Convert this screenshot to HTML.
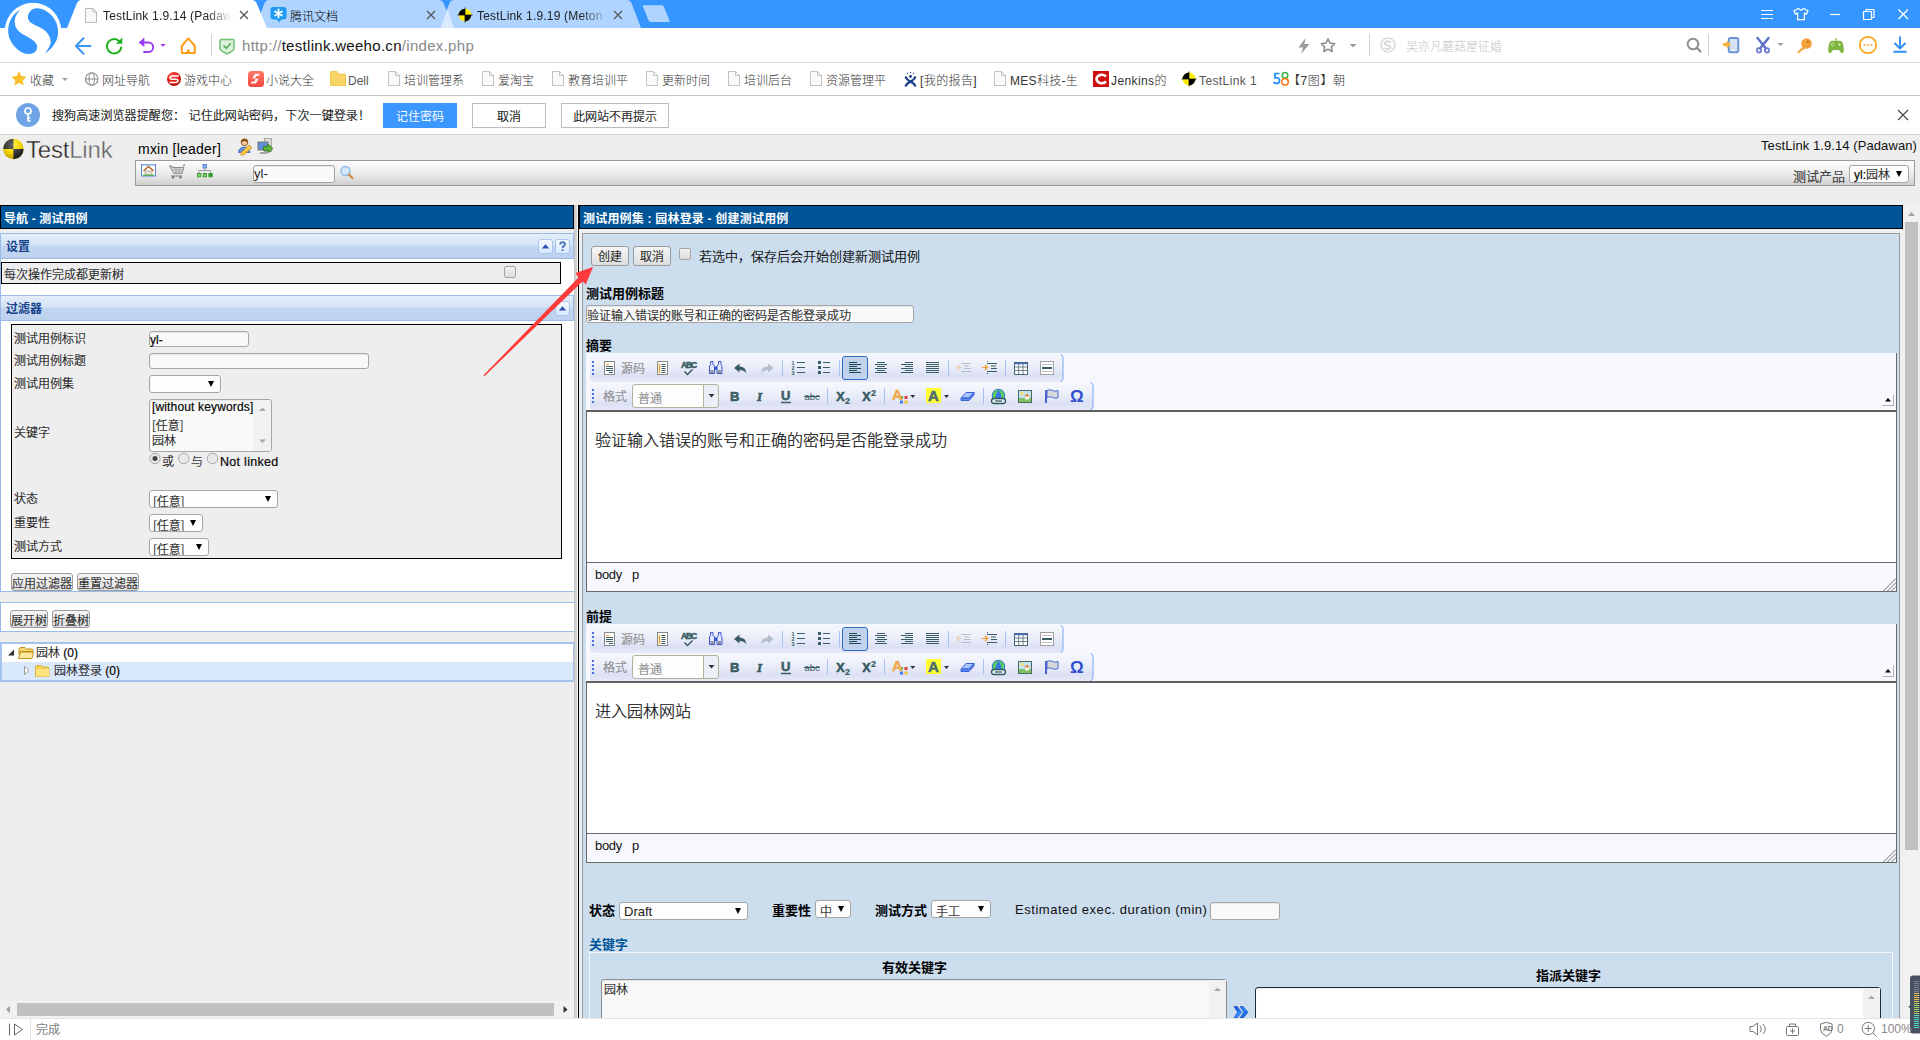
<!DOCTYPE html>
<html lang="zh-CN">
<head>
<meta charset="utf-8">
<title>TestLink 1.9.14 (Padawan)</title>
<style>
*{box-sizing:border-box;margin:0;padding:0}
html,body{width:1920px;height:1040px;overflow:hidden;background:#eee}
body{position:relative;font-family:"Liberation Sans","Noto Sans CJK SC",sans-serif;font-size:12px;color:#000}
.a{position:absolute}
.t{position:absolute;white-space:nowrap;line-height:16px;height:16px}
svg{position:absolute;overflow:visible}
/* ---------- browser chrome ---------- */
#titlebar{left:0;top:0;width:1920px;height:28px;background:#3696ff}
#navbar{left:0;top:28px;width:1920px;height:35px;background:#fff;border-bottom:1px solid #dedede}
#bmbar{left:0;top:63px;width:1920px;height:33px;background:#fff;border-bottom:1px solid #c6c6c6}
#infobar{left:0;top:96px;width:1920px;height:39px;background:#fff;border-bottom:1px solid #d4d4d4}
#statusbar{left:0;top:1018px;width:1920px;height:22px;background:#fff;border-top:1px solid #e4e4e4}
.tab{font-size:12px;color:#222;top:8px}
.bm{top:73px;font-size:12px;color:#333;font-weight:300}
.bml{color:#555}
.l{font-weight:300;color:#000;-webkit-text-stroke:.22px #222}
.doc{top:71px;width:12px;height:15px}
.ib{top:103px;height:25px;font-size:12px;line-height:26px;text-align:center;border:1px solid #bdbdbd;background:#fff;color:#000}
/* ---------- page ---------- */
.p{font-size:13px}
.c{font-family:"Noto Sans CJK SC","Liberation Sans",sans-serif}
.b{font-weight:bold}
.inp{position:absolute;background:#f9f9f9;border:1px solid #a6a6a6;border-radius:3px;box-shadow:inset 0 1px 1px rgba(0,0,0,.08)}
.sel{position:absolute;background:#fdfdfd;border:1px solid #a6a6a6;border-radius:3px}
.sel:after{content:"";position:absolute;right:6px;top:50%;margin-top:-3px;border:3.5px solid transparent;border-top:6px solid #000;border-bottom:0}
.btn{position:absolute;background:linear-gradient(#f6f6f6,#dedede);border:1px solid #9c9c9c;border-radius:3px;text-align:center;white-space:nowrap;font-size:12px;line-height:17px}
</style>
</head>
<body>
<!-- ======= BROWSER CHROME ======= -->
<div class="a" id="titlebar"></div>
<div class="a" id="navbar"></div>
<div class="a" id="bmbar"></div>
<div class="a" id="infobar"></div>
<svg style="left:0;top:0" width="1920" height="64" viewBox="0 0 1920 64">
  <!-- tabs -->
  <path d="M440 28 L449.5 3 Q451 0 454 0 L627 0 Q630 0 631.5 3 L641 28Z" fill="#afd4ff"/>
  <path d="M255 28 L264.5 3 Q266 0 269 0 L439 0 Q442 0 443.5 3 L454 28Z" fill="#afd4ff"/>
  <path d="M440.5 28 L447.5 9 L454 28Z" fill="#d9eaff"/>
  <path d="M67 28 L77 3 Q78.5 0 81.5 0 L252 0 Q255 0 256.5 3 L267 28Z" fill="#fff"/>
  <path d="M642.5 5.3 L661.5 5.3 Q663.3 5.3 664 7 L670 22 L651 22 Q649.2 22 648.5 20.3Z" fill="#afd4ff"/>
  <!-- logo -->
  <circle cx="33" cy="31" r="28.2" fill="#fff"/>
  <path d="M35 8.4 C44 7.5 52.5 14 56.5 23 C59 30 58.5 38 55 43 C52 48.5 48 51.5 45 53.2 C49.5 48 51.5 42.5 50.6 40.6 C50 36 47.5 32.5 43.5 29.5 C39 26.5 33 24.5 30 21.9 C27.5 19.5 27.3 15.5 29.5 12 C31 9.8 33 8.6 35 8.4Z" fill="#3696ff"/>
  <path d="M20 10 C17 13 14.7 17.5 14.7 21.2 C14.7 25.5 16 28 18.7 31.2 C22 34.5 28 36.5 32 39.5 C35.5 42 37.2 44.5 37.2 46.5 C37.2 49 36.2 51.5 33.5 53 C30 54.5 24.5 54.3 21 52 C15.5 48.5 11 43 9 37 C7.5 31.5 8 25 10.5 20 C13 15 16.5 11.8 20 10Z" fill="#3696ff"/>
  <!-- tab icons -->
  <path d="M85.5 8.5 H93 L96.5 12 V22.5 H85.5Z M93 8.5 V12 H96.5" fill="#f8f8f8" stroke="#b9b9b9" stroke-width="1"/>
  <path d="M240 11 l8 8 m0 -8 l-8 8" stroke="#555" stroke-width="1.2" fill="none"/>
  <path d="M273.5 7 h10 a3 3 0 0 1 3 3 v6.5 a3 3 0 0 1 -3 3 h-2.5 l-1.3 3 l-3 -3 h-3.2 a3 3 0 0 1 -3 -3 v-6.500 a3 3 0 0 1 3 -3z" fill="#1e9bf0"/>
  <path d="M278.5 9.5 v8 M275 11.500 l7 4 M282 11.500 l-7 4" stroke="#fff" stroke-width="1.8" stroke-linecap="round"/>
  <path d="M427 11 l8 8 m0 -8 l-8 8" stroke="#555" stroke-width="1.2" fill="none"/>
  <g transform="translate(465,15)"><circle r="6.300" fill="#ffee00"/><path d="M0 0 V-6.300 A6.300 6.300 0 0 0 -6.300 0Z M0 0 V6.300 A6.300 6.300 0 0 0 6.300 0Z" fill="#000"/><path d="M-7.500 0 h15 M0 -7.500 v15" stroke="#000" stroke-width=".7"/></g>
  <path d="M614 11 l8 8 m0 -8 l-8 8" stroke="#555" stroke-width="1.2" fill="none"/>
  <!-- window controls -->
  <path d="M1761 10.500 h12 M1761 14.500 h12 M1761 18.500 h12" stroke="#fff" stroke-width="1.200"/>
  <path d="M1798.300 8.500 l2.700 1.800 l2.700 -1.800 l4.300 2.300 l-1.600 3.300 l-2 -.9 v6.500 h-6.800 v-6.500 l-2 .9 l-1.600 -3.300z" fill="none" stroke="#fff" stroke-width="1.300" stroke-linejoin="round"/>
  <path d="M1830 14.500 h10" stroke="#fff" stroke-width="1.200"/>
  <path d="M1863.500 11.500 h8 v8 h-8z M1866 11.500 v-2 h8 v8 h-2.500" fill="none" stroke="#fff" stroke-width="1.200" stroke-linejoin="round"/>
  <path d="M1898.500 9.500 l9.500 9.500 m0 -9.500 l-9.500 9.500" stroke="#fff" stroke-width="1.300"/>
  <!-- nav icons -->
  <path d="M90.500 46 H76 M83.500 38.300 L76 46 L83.500 53.700" fill="none" stroke="#3c96f5" stroke-width="2" stroke-linecap="round" stroke-linejoin="round"/>
  <path d="M119.500 41.500 A7.200 7.200 0 1 0 121.200 47.500" fill="none" stroke="#1db11d" stroke-width="1.900" stroke-linecap="round"/>
  <path d="M122.300 37.500 v6.300 h-6.300z" fill="#1db11d"/>
  <path d="M140.500 42.500 H148.500 A4.700 4.700 0 0 1 148.500 52 H144" fill="none" stroke="#9a3cf0" stroke-width="1.900" stroke-linecap="round"/>
  <path d="M144.300 37.500 L138.800 42.500 L144.300 47z" fill="#9a3cf0"/>
  <path d="M160.500 44 h5 l-2.500 3z" fill="#9a3cf0"/>
  <path d="M181.800 46 L188.300 38.300 L194.800 46 V53 H181.800Z" fill="none" stroke="#ff9d1c" stroke-width="2" stroke-linejoin="round"/><path d="M187 53 v-3.500 h2.600 v3.500z" fill="#ff9d1c"/>
  <path d="M211.500 34 v22" stroke="#d0d0d0" stroke-width="1"/>
  <path d="M221 39.500 h12 q1 0 1 1 v7.500 q0 2 -1.500 2.800 l-5.500 3 l-5.500 -3 q-1.500 -.8 -1.500 -2.800 v-7.500 q0 -1 1 -1z" fill="#dff0de" stroke="#6cc070" stroke-width="1.500"/>
  <path d="M223.500 45.500 l2.800 2.800 l4.500 -5" fill="none" stroke="#4caf50" stroke-width="1.600"/>
  <path d="M1305.500 38 l-7 9.500 h4.500 l-2 6.500 l8.500 -10 h-5z" fill="#9a9a9a"/>
  <path d="M1328 38.800 l2 4.300 l4.700 .6 l-3.400 3.200 l.9 4.600 l-4.200 -2.300 l-4.200 2.300 l.9 -4.600 l-3.400 -3.200 l4.700 -.6z" fill="none" stroke="#8c8c8c" stroke-width="1.500" stroke-linejoin="round"/>
  <path d="M1349.500 44 h7 l-3.500 3.500z" fill="#999"/>
  <path d="M1369.500 34 v22" stroke="#d0d0d0" stroke-width="1"/>
  <circle cx="1388" cy="45" r="7" fill="none" stroke="#cfcfcf" stroke-width="1.200"/>
  <path d="M1391 42.500 q-3 -2 -5.500 -.5 q-1.500 1.500 .5 2.800 l3.500 1.200 q2 1.300 .3 2.700 q-2.500 1.300 -5.300 -.7" fill="none" stroke="#cfcfcf" stroke-width="1.500"/>
  <circle cx="1693" cy="44" r="5.300" fill="none" stroke="#909090" stroke-width="2"/>
  <path d="M1697 48 l3.500 3.500" stroke="#909090" stroke-width="2.200" stroke-linecap="round"/>
  <path d="M1708.500 34 v22" stroke="#d0d0d0" stroke-width="1"/>
  <rect x="1728.700" y="38" width="9.600" height="14.300" rx="1.800" fill="#d5e2f4" stroke="#6a93d6" stroke-width="1.900"/>
  <path d="M1732 50.500 h3" stroke="#fff" stroke-width="1"/>
  <path d="M1723 43 h3.500 v-2.500 l4.500 4 l-4.500 4 v-2.500 h-3.500z" fill="#f7b235"/>
  <path d="M1757.500 38 l8.500 10.500 M1768.500 38 l-8.500 10.500" stroke="#5f74c8" stroke-width="2.500" stroke-linecap="round"/>
  <circle cx="1759" cy="50.300" r="2.200" fill="none" stroke="#6f7fd0" stroke-width="1.800"/><circle cx="1767" cy="50.300" r="2.200" fill="none" stroke="#6f7fd0" stroke-width="1.800"/>
  <path d="M1777.500 43 h6 l-3 3z" fill="#999"/>
  <circle cx="1806.500" cy="43.500" r="5.300" fill="#f3a33c"/><circle cx="1808" cy="42" r="1.300" fill="#c07818"/>
  <path d="M1803 46.500 l-5.500 5.500 v1 h2.300 v-1.300 h1.500 v-1.500 h1.500 l2 -2z" fill="#f3a33c"/>
  <path d="M1829.500 53 q-2 -1 -1.200 -5 l.8 -4.500 q.6 -2.700 3.200 -2.700 h7.400 q2.600 0 3.200 2.700 l.8 4.500 q.8 4 -1.200 5 q-1.500 .3 -2.500 -1.500 l-1 -1.500 h-6 l-1 1.500 q-1 1.800 -2.500 1.500z" fill="#7db541"/>
  <path d="M1836 40.800 v-2.500" stroke="#7db541" stroke-width="1.500"/>
  <circle cx="1832.500" cy="44.500" r="1.500" fill="none" stroke="#d7ecbf" stroke-width=".8"/><path d="M1838 44.500 h3.200 M1839.600 43 v3" stroke="#d7ecbf" stroke-width=".8"/>
  <circle cx="1868" cy="45" r="8.200" fill="none" stroke="#ffa41c" stroke-width="1.800"/>
  <path d="M1863.700 45 h1.800 M1867.100 45 h1.800 M1870.500 45 h1.800" stroke="#ffa41c" stroke-width="1.600"/>
  <path d="M1900 36.500 v11.500 M1894.500 43 l5.500 5.500 l5.500 -5.500 M1893.500 51.700 h13" fill="none" stroke="#2f8ff5" stroke-width="1.900"/>
</svg>
<div class="t tab" style="left:103px;width:129px;overflow:hidden;letter-spacing:.19px;-webkit-mask-image:linear-gradient(90deg,#000 82%,transparent 100%);mask-image:linear-gradient(90deg,#000 80%,transparent 100%)">TestLink 1.9.14 (Padaw</div>
<div class="t tab" style="left:290px;top:9px;font-weight:300;color:#000">腾讯文档</div>
<div class="t tab" style="left:477px;width:131px;overflow:hidden;letter-spacing:.19px;-webkit-mask-image:linear-gradient(90deg,#000 82%,transparent 100%);mask-image:linear-gradient(90deg,#000 80%,transparent 100%)">TestLink 1.9.19 (Meton</div>
<div class="t" style="left:242px;top:36px;height:20px;line-height:20px;font-size:15px;letter-spacing:.3px;color:#888">http://<span style="color:#111">testlink.weeho.cn</span>/index.php</div>
<div class="t" style="left:1406px;top:39px;font-size:12px;color:#c4c4c4;font-weight:300">吴亦凡蘑菇屋征婚</div>
<!-- bookmarks -->
<svg style="left:0;top:63px" width="1920" height="33" viewBox="0 63 1920 33">
  <path d="M19 71.300 l2.300 4.800 l5.200 .7 l-3.800 3.600 l1 5.200 l-4.700 -2.600 l-4.700 2.600 l1 -5.200 l-3.800 -3.600 l5.200 -.7z" fill="#fbc02d"/>
  <path d="M62 78 h6 l-3 3z" fill="#a0a0a0"/>
  <circle cx="91.700" cy="79" r="6.200" fill="none" stroke="#8a8a8a" stroke-width="1.100"/>
  <ellipse cx="91.700" cy="79" rx="2.700" ry="6.200" fill="none" stroke="#8a8a8a" stroke-width="1"/>
  <path d="M85.500 79 h12.400" stroke="#8a8a8a" stroke-width="1"/>
  <defs><radialGradient id="sgr" cx="38%" cy="28%" r="80%"><stop offset="0" stop-color="#ff5a4a"/><stop offset=".55" stop-color="#dc1a14"/><stop offset="1" stop-color="#a80c08"/></radialGradient><linearGradient id="nvg" x1="0" y1="0" x2="0" y2="1"><stop offset="0" stop-color="#ff7868"/><stop offset="1" stop-color="#f04a40"/></linearGradient></defs>
  <circle cx="174" cy="79" r="7" fill="url(#sgr)"/>
  <path d="M178.800 76 H172.300 q-2.300 0 -2.300 1.600 q0 1.600 2.300 1.600 h3.400 q2.300 0 2.300 1.600 q0 1.600 -2.300 1.600 H169.300" fill="none" stroke="#fff" stroke-width="1.500"/>
  <rect x="248" y="71" width="16" height="16" rx="3.500" fill="url(#nvg)"/>
  <path d="M259.800 73.800 h-5 l-2.600 4.800 h3.600 l-1.400 2.800 h-2.600 l-1 2.200 h5.200 l2.600 -4.800 h-3.600 l1.400 -2.800 h2.400z" fill="#fff" opacity=".92"/>
  <path d="M330.500 72.500 q0 -1 1 -1 h5 q1 0 1 1 v1.500 h7 q1 0 1 1 v10.500 h-15z" fill="#f8d464" stroke="#f3c650" stroke-width="1"/>
  <path transform="translate(388 71)" d="M.5 .5 H7.500 L11.500 4.500 V14.500 H.5Z M7.500 .5 V4.500 H11.500" fill="#fafafa" stroke="#c2c2c2" stroke-width="1"/><path transform="translate(482 71)" d="M.5 .5 H7.500 L11.500 4.500 V14.500 H.5Z M7.500 .5 V4.500 H11.500" fill="#fafafa" stroke="#c2c2c2" stroke-width="1"/><path transform="translate(552 71)" d="M.5 .5 H7.500 L11.500 4.500 V14.500 H.5Z M7.500 .5 V4.500 H11.500" fill="#fafafa" stroke="#c2c2c2" stroke-width="1"/><path transform="translate(646 71)" d="M.5 .5 H7.500 L11.500 4.500 V14.500 H.5Z M7.500 .5 V4.500 H11.500" fill="#fafafa" stroke="#c2c2c2" stroke-width="1"/><path transform="translate(728 71)" d="M.5 .5 H7.500 L11.500 4.500 V14.500 H.5Z M7.500 .5 V4.500 H11.500" fill="#fafafa" stroke="#c2c2c2" stroke-width="1"/><path transform="translate(810 71)" d="M.5 .5 H7.500 L11.500 4.500 V14.500 H.5Z M7.500 .5 V4.500 H11.500" fill="#fafafa" stroke="#c2c2c2" stroke-width="1"/><path transform="translate(994 71)" d="M.5 .5 H7.500 L11.500 4.500 V14.500 H.5Z M7.500 .5 V4.500 H11.500" fill="#fafafa" stroke="#c2c2c2" stroke-width="1"/>
  <path d="M905.500 76.500 q1 3 5 5 q4 2 5 5 M915.500 76.500 q-1 3 -5 5 q-4 2 -5 5" fill="none" stroke="#1b3f8f" stroke-width="2.200"/>
  <circle cx="910.500" cy="76.500" r="1.400" fill="#1b3f8f"/>
  <path d="M907 73 l.8 .8 M910.500 72 v1 M914 73 l-.8 .8" stroke="#1b3f8f" stroke-width="1.100"/>
  <rect x="1093" y="71" width="16" height="16" fill="#d00f0f"/>
  <path d="M1106 76.500 q-2.500 -2.500 -6 -1.500 q-3.500 1.500 -3.500 4 q0 2.500 3.500 4 q3.500 1 6 -1.500" fill="none" stroke="#fff" stroke-width="2.600"/>
  <g transform="translate(1189,79)"><circle r="6.500" fill="#ffee00"/><path d="M0 0 V-6.500 A6.500 6.500 0 0 0 -6.500 0Z M0 0 V6.500 A6.500 6.500 0 0 0 6.500 0Z" fill="#000"/><path d="M-7.500 0 h15 M0 -7.500 v15" stroke="#000" stroke-width=".7"/></g>
  <path d="M1279.500 73.500 h-4.500 v4.500 q4 -1 4.500 2.200 q0 3.300 -3 3.300 q-2 0 -2.800 -1.500" fill="none" stroke="#1a8cff" stroke-width="1.700"/>
  <circle cx="1285" cy="75.300" r="2.800" fill="none" stroke="#3bb54a" stroke-width="1.600"/>
  <circle cx="1285" cy="81.800" r="3.300" fill="none" stroke="#ff7a1a" stroke-width="1.600"/>
</svg>
<div class="t bm" style="left:30px">收藏</div>
<div class="t bm" style="left:102px">网址导航</div>
<div class="t bm" style="left:184px">游戏中心</div>
<div class="t bm" style="left:266px">小说大全</div>
<div class="t bm bml" style="left:348px">Dell</div>
<div class="t bm" style="left:404px">培训管理系</div>
<div class="t bm" style="left:498px">爱淘宝</div>
<div class="t bm" style="left:568px">教育培训平</div>
<div class="t bm" style="left:662px">更新时间</div>
<div class="t bm" style="left:744px">培训后台</div>
<div class="t bm" style="left:826px">资源管理平</div>
<div class="t bm" style="left:920px;letter-spacing:.4px">[我的报告]</div>
<div class="t bm" style="left:1010px;letter-spacing:.3px">MES科技-生</div>
<div class="t bm" style="left:1111px;letter-spacing:.4px">Jenkins的</div>
<div class="t bm bml" style="left:1199px;letter-spacing:.4px">TestLink 1</div>
<div class="t bm" style="left:1288px;letter-spacing:.6px">【7图】朝</div>
<!-- info bar -->
<svg style="left:0;top:96px" width="1920" height="39" viewBox="0 96 1920 39">
  <circle cx="28" cy="115" r="12" fill="#6fa5e6"/>
  <circle cx="28" cy="111" r="3" fill="none" stroke="#fff" stroke-width="1.700"/>
  <path d="M28 114 v7.500 M28 118 h2.500 M28 121 h2.500" fill="none" stroke="#fff" stroke-width="1.700"/>
  <path d="M1898 110 l10 10 m0 -10 l-10 10" stroke="#444" stroke-width="1.100"/>
</svg>
<div class="t" style="left:52px;top:108px;font-size:12px;letter-spacing:.1px;color:#000;font-weight:300;-webkit-text-stroke-width:.22px">搜狗高速浏览器提醒您： 记住此网站密码，下次一键登录！</div>
<div class="a ib" style="left:383px;width:74px;background:#3a97ff;border-color:#3a97ff;color:#fff">记住密码</div>
<div class="a ib" style="left:472px;width:74px;font-weight:300;-webkit-text-stroke-width:.22px">取消</div>
<div class="a ib" style="left:561px;width:108px;font-weight:300;-webkit-text-stroke-width:.22px">此网站不再提示</div>
<!-- ======= PAGE: TestLink title frame ======= -->
<svg style="left:0;top:135px" width="300" height="30" viewBox="0 135 300 30">
  <defs>
    <radialGradient id="tly" cx="45%" cy="30%" r="75%"><stop offset="0" stop-color="#fff36a"/><stop offset=".5" stop-color="#f5d800"/><stop offset="1" stop-color="#b89a00"/></radialGradient>
    <radialGradient id="tlk" cx="45%" cy="30%" r="75%"><stop offset="0" stop-color="#666"/><stop offset="1" stop-color="#111"/></radialGradient>
  </defs>
  <circle cx="13.400" cy="149" r="10.200" fill="url(#tly)"/>
  <path d="M13.400 149 V138.800 A10.200 10.200 0 0 0 3.200 149Z M13.400 149 V159.200 A10.200 10.200 0 0 0 23.600 149Z" fill="url(#tlk)"/>
  <!-- user-edit icon -->
  <circle cx="244.500" cy="142.500" r="3.200" fill="#f6c9a0" stroke="#9a5a1c" stroke-width="1"/>
  <path d="M241.100 142.300 a3.400 3.400 0 0 1 6.800 0 q-1.500 -1.800 -3.400 -1.500 q-1.900 -.3 -3.400 1.500z" fill="#8a4a12" stroke="#8a4a12" stroke-width=".8"/>
  <path d="M238.500 152.500 q0 -5 6 -5.500 q5 .5 5.500 5.500z" fill="#5a8fe0" stroke="#3565b5" stroke-width=".8"/>
  <path d="M241.500 152 l7.500 -7 l3 2.500 l-7.500 7 l-3.500 .8z" fill="#f7c748" stroke="#d08a1c" stroke-width=".8"/>
  <!-- computer-go icon -->
  <rect x="264.500" y="138.500" width="7" height="13" fill="#dcdcdc" stroke="#9a9a9a" stroke-width=".8"/>
  <rect x="258" y="142" width="10" height="8" fill="#5b8fd8" stroke="#7a7a7a" stroke-width="1"/>
  <path d="M260 153 h7" stroke="#8a8a8a" stroke-width="1.500"/>
  <path d="M263.500 146.500 h4.500 v-2.500 l5 4.500 l-5 4.500 v-2.500 h-4.500z" fill="#5fb53a" stroke="#2f7a1a" stroke-width=".8"/>
</svg>
<div class="t" style="left:26px;top:136px;height:28px;line-height:28px;font-size:24px;letter-spacing:-.2px;color:#1c1c1c;-webkit-text-stroke:.4px #eee">Test<span style="color:#606060">Link</span></div>
<div class="t" style="left:138px;top:141px;font-size:14px;letter-spacing:.22px;color:#000">mxin [leader]</div>
<div class="t p" style="left:1761px;top:138px;letter-spacing:.08px;color:#111">TestLink 1.9.14 (Padawan)</div>
<div class="a" style="left:135px;top:160px;width:1780px;height:26px;border:1px solid #9a9a9a;background:linear-gradient(#fdfdfd 0%,#f1f1f1 35%,#e2e2e2 70%,#cfcfcf 100%)"></div>
<svg style="left:135px;top:160px" width="230" height="26" viewBox="135 160 230 26">
  <rect x="141.500" y="164.500" width="14" height="11.500" fill="#fff" stroke="#5b86d6" stroke-width="1"/>
  <path d="M142 165 h13" stroke="#9cbcf0" stroke-width="1.500"/>
  <path d="M143.500 171 l5 -4.500 l5 4.500" fill="none" stroke="#b5651d" stroke-width="1.500"/>
  <path d="M145 171 h7 v4 h-7z" fill="#e8e0d0" stroke="#8a8a8a" stroke-width=".6"/>
  <path d="M143 175.300 h11" stroke="#4caf50" stroke-width="1.200"/>
  <path d="M169.500 166 h2.300 l.7 1.500 h11.500 l-2 6 h-8z" fill="#d2d2d2" stroke="#8c8c8c" stroke-width="1"/><path d="M173.500 169.500 h9.500 M174.500 171.500 h8 M176 168 v5.500 M179 168 v5.500" stroke="#a8a8a8" stroke-width=".7"/>
  <path d="M183 166 l2 -1.500" stroke="#8c8c8c" stroke-width="1.200"/>
  <path d="M171 176 h11" stroke="#8c8c8c" stroke-width="1.300"/>
  <circle cx="173" cy="177.500" r="1.200" fill="#777"/><circle cx="180.500" cy="177.500" r="1.200" fill="#777"/>
  <rect x="203" y="164.500" width="3.500" height="3.500" fill="#8ab4f0" stroke="#3f7ad8" stroke-width=".8"/>
  <path d="M204.800 168 v2.500 M199 173 v-2.500 h11.500 v2.500" fill="none" stroke="#888" stroke-width=".8"/>
  <rect x="197.500" y="173.500" width="3.300" height="3.300" fill="#7fd06a" stroke="#2f9a2a" stroke-width=".9"/>
  <rect x="203.200" y="173.500" width="3.300" height="3.300" fill="#7fd06a" stroke="#2f9a2a" stroke-width=".9"/>
  <rect x="208.900" y="173.500" width="3.300" height="3.300" fill="#2f9a2a" stroke="#2f9a2a" stroke-width=".9"/>
  <circle cx="345.500" cy="171" r="4.500" fill="#d5e8fb" stroke="#8fb8e8" stroke-width="1.300"/>
  <path d="M349 174.500 l3.500 3.800" stroke="#c98a4a" stroke-width="2.200" stroke-linecap="round"/>
</svg>
<div class="inp" style="left:253px;top:165px;width:82px;height:18px;background:#fafafa"></div>
<div class="t p" style="left:254px;top:166px;color:#222">yl-</div>
<div class="t c" style="left:1793px;top:168px;font-size:13px;color:#222;font-weight:300;-webkit-text-stroke-width:.22px">测试产品</div>
<div class="sel" style="left:1849px;top:165px;width:60px;height:18px"></div>
<div class="t l" style="left:1854px;top:167px;font-size:12px">yl:园林</div>
<!-- ======= PAGE: left frame (navigation tree) ======= -->
<div class="a" style="left:0;top:205px;width:574px;height:24px;background:#005498;border:1px solid #000"></div>
<div class="t b" style="left:4px;top:211px;font-size:12px;letter-spacing:.12px;color:#fff">导航 - 测试用例</div>
<!-- settings panel -->
<div class="a" style="left:0;top:233px;width:574px;height:359px;background:#fff;border:1px solid #99bbe8;border-right:0"></div>
<div class="a" style="left:0;top:233px;width:574px;height:26px;border:1px solid #99bbe8;background:linear-gradient(#e3edf9 0%,#d5e3f5 45%,#c3d6f0 50%,#bdd2ee 100%)"></div>
<div class="t b" style="left:6px;top:239px;font-size:12px;color:#15428b">设置</div>
<div class="a" style="left:538px;top:239px;width:15px;height:15px;border:1px solid #a9c5ec;border-radius:3px;background:linear-gradient(#f4f9ff,#d8e9ff)"></div>
<div class="a" style="left:555px;top:239px;width:15px;height:15px;border:1px solid #a9c5ec;border-radius:3px;background:linear-gradient(#f4f9ff,#d8e9ff)"></div>
<svg style="left:538px;top:239px" width="32" height="14" viewBox="538 239 32 14"><path d="M541.800 248.500 h7.400 l-3.700 -4.200z" fill="#2b4fb0"/><path d="M560.200 244.500 q0 -2.200 2.400 -2.200 q2.400 0 2.400 2 q0 1.200 -1.300 1.900 q-1.100 .6 -1.100 1.800 M562.600 249.300 v1.700" fill="none" stroke="#4a78b8" stroke-width="1.900"/></svg>
<div class="a" style="left:1px;top:262px;width:560px;height:22px;background:#eee;border:1px solid #000"></div>
<div class="t l" style="left:4px;top:267px;font-size:12px">每次操作完成都更新树</div>
<div class="a" style="left:504px;top:266px;width:12px;height:12px;border:1px solid #a5a5a5;border-radius:2px;background:linear-gradient(#f2f2f2,#dcdcdc)"></div>
<!-- filter panel -->
<div class="a" style="left:0;top:295px;width:574px;height:26px;border:1px solid #99bbe8;background:linear-gradient(#e3edf9 0%,#d5e3f5 45%,#c3d6f0 50%,#bdd2ee 100%)"></div>
<div class="t b" style="left:6px;top:301px;font-size:12px;color:#15428b">过滤器</div>
<div class="a" style="left:555px;top:301px;width:15px;height:15px;border:1px solid #a9c5ec;border-radius:3px;background:linear-gradient(#f4f9ff,#d8e9ff)"></div>
<svg style="left:555px;top:301px" width="14" height="14" viewBox="555 301 14 14"><path d="M558.800 310.500 h7.400 l-3.700 -4.200z" fill="#2b4fb0"/></svg>
<div class="a" style="left:11px;top:324px;width:551px;height:235px;background:#eee;border:1px solid #000"></div>
<div class="t l" style="left:14px;top:331px">测试用例标识</div>
<div class="inp" style="left:149px;top:331px;width:100px;height:16px"></div>
<div class="t l" style="left:150px;top:332px">yl-</div>
<div class="t l" style="left:14px;top:353px">测试用例标题</div>
<div class="inp" style="left:149px;top:353px;width:220px;height:16px"></div>
<div class="t l" style="left:14px;top:376px">测试用例集</div>
<div class="sel" style="left:149px;top:375px;width:72px;height:18px"></div>
<div class="inp" style="left:149px;top:399px;width:123px;height:53px;overflow:hidden"><div class="a" style="right:0;top:0;width:17px;height:51px;background:#f1f1f1"></div></div>
<svg style="left:254px;top:400px" width="17" height="51" viewBox="254 400 17 51"><path d="M259 411 h7 l-3.500 -3.500z M259 439.500 h7 l-3.500 3.500z" fill="#a8a8a8"/></svg>
<div class="t l" style="left:152px;top:399px;letter-spacing:.15px">[without keywords]</div>
<div class="t l c" style="left:152px;top:417px">[任意]</div>
<div class="t l" style="left:152px;top:433px">园林</div>
<div class="t l" style="left:14px;top:425px">关键字</div>
<svg style="left:149px;top:452px" width="70" height="14" viewBox="149 452 70 14">
  <circle cx="155" cy="458.500" r="5.200" fill="#e9e9e9" stroke="#a8a8a8" stroke-width="1"/><circle cx="155" cy="458.500" r="2.500" fill="#444"/>
  <circle cx="183.700" cy="458.500" r="5.200" fill="#e9e9e9" stroke="#a8a8a8" stroke-width="1"/>
  <circle cx="212.500" cy="458.500" r="5.200" fill="#e9e9e9" stroke="#a8a8a8" stroke-width="1"/>
</svg>
<div class="t l" style="left:162px;top:454px">或</div>
<div class="t l" style="left:191px;top:454px">与</div>
<div class="t l" style="left:220px;top:454px;font-size:12.500px;letter-spacing:.3px">Not linked</div>
<div class="t l" style="left:14px;top:491px">状态</div>
<div class="sel" style="left:149px;top:490px;width:129px;height:18px"></div>
<div class="t l c" style="left:153px;top:493px;height:14px;overflow:hidden">[任意]</div>
<div class="t l" style="left:14px;top:515px">重要性</div>
<div class="sel" style="left:149px;top:514px;width:54px;height:18px"></div>
<div class="t l c" style="left:153px;top:517px;height:14px;overflow:hidden">[任意]</div>
<div class="t l" style="left:14px;top:539px">测试方式</div>
<div class="sel" style="left:149px;top:538px;width:60px;height:18px"></div>
<div class="t l c" style="left:153px;top:541px;height:14px;overflow:hidden">[任意]</div>
<div class="btn" style="left:11px;top:573px;width:62px;height:18px;line-height:20px;font-weight:300;-webkit-text-stroke-width:.22px;color:#111">应用过滤器</div>
<div class="btn" style="left:77px;top:573px;width:62px;height:18px;line-height:20px;font-weight:300;-webkit-text-stroke-width:.22px;color:#111">重置过滤器</div>
<!-- tree buttons panel -->
<div class="a" style="left:0;top:602px;width:574px;height:30px;background:#fff;border:1px solid #99bbe8;border-right:0"></div>
<div class="btn" style="left:10px;top:610px;width:38px;height:18px;line-height:20px;font-weight:300;-webkit-text-stroke-width:.22px;color:#111">展开树</div>
<div class="btn" style="left:52px;top:610px;width:38px;height:18px;line-height:20px;font-weight:300;-webkit-text-stroke-width:.22px;color:#111">折叠树</div>
<!-- tree -->
<div class="a" style="left:0;top:642px;width:574px;height:40px;background:#fff;border:2px solid #a6c3ec;border-right-width:1px"></div>
<div class="a" style="left:2px;top:662px;width:571px;height:18px;background:#d9e8fb"></div>
<svg style="left:0;top:643px" width="60" height="38" viewBox="0 643 60 38">
  <path d="M14 649.500 v6 h-6z" fill="#333"/>
  <path d="M19 649.500 q0 -2 2 -2 h4 l1.500 1.500 h5 q1.500 0 1.500 1.500 v1 h-12 l-2 3z" fill="#f5d774" stroke="#b8860b" stroke-width=".9"/>
  <path d="M18.500 658.500 l2 -6.500 h13 l-1.500 6.500z" fill="#fbe9a0" stroke="#b8860b" stroke-width=".9"/>
  <path d="M24.500 666.500 v8 l4.500 -4z" fill="#fff" stroke="#999" stroke-width="1"/>
  <path d="M35.500 667 q0 -1.500 1.500 -1.500 h4 l1.500 1.500 h5 q1.500 0 1.500 1.500 v8 h-13.500z" fill="#f5d15a" stroke="#d4a52a" stroke-width=".8"/>
  <path d="M36 669 h13 v7.500 h-13z" fill="#fbe27a"/>
</svg>
<div class="t l" style="left:36px;top:645px">园林 (0)</div>
<div class="t l" style="left:54px;top:663px">园林登录 (0)</div>
<!-- horizontal scrollbar -->
<div class="a" style="left:0;top:1001px;width:574px;height:18px;background:#f1f1f1"></div>
<div class="a" style="left:17px;top:1003px;width:537px;height:13px;background:#c1c1c1"></div>
<svg style="left:0;top:1001px" width="574" height="18" viewBox="0 1001 574 18"><path d="M10 1005.800 v7.400 l-4 -3.700z" fill="#a0a0a0"/><path d="M563.500 1006 v7 l4 -3.500z" fill="#333"/></svg>
<!-- frame splitter -->
<div class="a" style="left:574px;top:205px;width:4px;height:813px;background:linear-gradient(90deg,#c4c4c4 0,#c4c4c4 1px,#d2d2d2 1px,#d2d2d2 3px,#f6f6f6 3px)"></div>
<!-- ======= PAGE: right frame (create test case) ======= -->
<style>.tbb{height:28px;border-radius:4px 3px 3px 4px;background:linear-gradient(#f7f8fd 0%,#f0f2fb 30%,#e4e8f7 60%,#dbe0f4 78%,#e6e9f8 100%)}</style>
<div class="a" style="left:578px;top:205px;width:1px;height:813px;background:#000"></div>
<div class="a" style="left:579px;top:205px;width:1324px;height:24px;background:#005498;border:1px solid #000"></div>
<div class="t b" style="left:583px;top:211px;font-size:12px;letter-spacing:.2px;color:#fff">测试用例集 : 园林登录 - 创建测试用例</div>
<div class="a" style="left:582px;top:233px;width:1318px;height:800px;background:#ccddee;border:1px solid #999"></div>
<div class="btn" style="left:591px;top:246px;width:38px;height:20px;font-size:12px;line-height:20px;color:#111;font-weight:300;-webkit-text-stroke-width:.22px">创建</div>
<div class="btn" style="left:633px;top:246px;width:38px;height:20px;font-size:12px;line-height:20px;color:#111;font-weight:300;-webkit-text-stroke-width:.22px">取消</div>
<div class="a" style="left:679px;top:248px;width:12px;height:12px;border:1px solid #a5a5a5;border-radius:2px;background:linear-gradient(#f2f2f2,#dcdcdc)"></div>
<div class="t c" style="left:699px;top:248px;font-size:13px;color:#000;font-weight:300;-webkit-text-stroke-width:.22px">若选中，保存后会开始创建新测试用例</div>
<div class="t c b" style="left:586px;top:285px;font-size:13px">测试用例标题</div>
<div class="inp" style="left:586px;top:305px;width:328px;height:18px"></div>
<div class="t c l" style="left:587px;top:307px;font-size:12px">验证输入错误的账号和正确的密码是否能登录成功</div>
<div class="t c b" style="left:586px;top:337px;font-size:13px">摘要</div>
<div class="a" style="left:586px;top:353px;width:1311px;height:57px;background:#f7f8fd;border-right:1px solid #696969"></div>
<div class="a tbb" style="left:590px;top:354px;width:473px"></div>
<div class="a tbb" style="left:590px;top:382px;width:503px"></div>
<div class="a" style="left:842px;top:356px;width:26px;height:24px;border:1px solid #316ac5;border-radius:3px;background:#c1d2ee"></div>
<div class="a" style="left:632px;top:384px;width:87px;height:24px;border:1px solid #b0b29c;border-radius:3px;background:linear-gradient(90deg,#fdfdfe 0,#fdfdfe 70px,#b0b29c 70px,#b0b29c 71px,#eceef8 71px)"></div>
<svg style="left:586px;top:353px" width="520" height="57" viewBox="586 353 520 57">

  <g fill="#4a6fd8"><rect x="592" y="361" width="2" height="2"/><rect x="592" y="365" width="2" height="2"/><rect x="592" y="369" width="2" height="2"/><rect x="592" y="373" width="2" height="2"/><rect x="592" y="389" width="2" height="2"/><rect x="592" y="393" width="2" height="2"/><rect x="592" y="397" width="2" height="2"/><rect x="592" y="401" width="2" height="2"/></g>
  <g stroke="#a9c1f5" stroke-width="1"><path d="M782.500 360 v16 M839.500 360 v16 M948.500 360 v16 M1005.500 360 v16 M827.500 388 v16 M884.500 388 v16 M983.500 388 v16"/></g>
  <!-- source -->
  <rect x="604.500" y="361.500" width="10" height="13" fill="#fff" stroke="#8a8a8a"/>
  <path d="M606 364.500 h3" stroke="#f0a030"/><path d="M606 366.500 h7 M606 368.500 h7 M606 370.500 h7 M609 372.500 h4" stroke="#3a5d63"/>
  <!-- templates -->
  <rect x="657.500" y="361.500" width="10" height="13" fill="#fff" stroke="#8a8a8a"/>
  <path d="M659.500 364 v9" stroke="#f0a030" stroke-width="1.500"/><path d="M661.500 364.500 h4 M661.500 366.500 h4 M661.500 368.500 h4 M661.500 370.500 h4 M661.500 372.500 h4" stroke="#3a5d63"/>
  <!-- spellcheck tick -->
  <path d="M684.500 371.500 l3 3 l5 -5" fill="none" stroke="#3a5d63" stroke-width="1.500"/>
  <!-- binoculars -->
  <path d="M710.500 361.500 h2.500 v3 l1.500 1.500 v7.500 h-5 v-7.500 l1 -1.500z M718.500 361.500 h2.500 v3 l1 1.500 v7.500 h-5 v-7.500 l1.500 -1.500z" fill="#e4e9ff" stroke="#3a55d0" stroke-width="1"/>
  <path d="M714.500 366.500 h2.500 v3.500 h-2.500z" fill="#3a55d0"/><path d="M710.500 370 h3 v3 h-3z M718 370 h3 v3 h-3z" fill="#909090"/>
  <!-- undo / redo -->
  <path d="M734 368 l5.500 -4.500 v3 q6.500 0 7 7 q-2 -3.500 -7 -3.500 v2.500z" fill="#3a5d63"/>
  <path d="M773.500 368 l-5.500 -4.500 v3 q-6.500 0 -7 7 q2 -3.500 7 -3.500 v2.500z" fill="#b3c0cc"/>
  <!-- OL -->
  <path d="M797 362.500 h8 M797 367.500 h8 M797 372.500 h8" stroke="#3a5d63" stroke-width="1"/>
  <g font-family="Liberation Sans,sans-serif" font-size="5.500" font-weight="bold" fill="#3a5d63"><text x="791.500" y="364.500">1</text><text x="791.500" y="369.500">2</text><text x="791.500" y="374.500">3</text></g>
  <!-- UL -->
  <path d="M823 362.500 h7 M823 367.500 h7 M823 372.500 h7" stroke="#3a5d63" stroke-width="1"/>
  <path d="M818 361 h3 v3 h-3z M818 366 h3 v3 h-3z M818 371 h3 v3 h-3z" fill="#3a5d63"/>
  <!-- align left (active) -->
  <path d="M849 362.500 h8 M849 364.500 h12 M849 366.500 h8 M849 368.500 h12 M849 370.500 h8 M849 372.500 h12" stroke="#1e4a4e" stroke-width="1"/>
  <path d="M877 362.500 h8 M875 364.500 h12 M877 366.500 h8 M875 368.500 h12 M877 370.500 h8 M875 372.500 h12" stroke="#3a5d63" stroke-width="1"/>
  <path d="M905 362.500 h8 M901 364.500 h12 M905 366.500 h8 M901 368.500 h12 M905 370.500 h8 M901 372.500 h12" stroke="#3a5d63" stroke-width="1"/>
  <path d="M926 362.500 h13 M926 364.500 h13 M926 366.500 h13 M926 368.500 h13 M926 370.500 h13 M926 372.500 h13" stroke="#3a5d63" stroke-width="1"/>
  <!-- outdent (disabled) / indent -->
  <g opacity=".4"><path d="M961 363.500 h10 M964 366 h5 M964 368.500 h7 M961 371.500 h10" stroke="#6a7a80" stroke-width="1.200"/><path d="M962 367.500 h-5 M959.500 365 l-2.500 2.500 l2.500 2.500" fill="none" stroke="#f0a030" stroke-width="1.200"/></g>
  <path d="M987 363.500 h10 M991 366 h5 M991 368.500 h6 M987 371.500 h10" stroke="#3a5d63" stroke-width="1.200"/><path d="M982 367.500 h5.500 M985 365 l2.500 2.500 l-2.500 2.500" fill="none" stroke="#f59a23" stroke-width="1.200"/>
  <path d="M987 361.500 h1 M987 373.500 h1" stroke="#3a5d63"/>
  <!-- table -->
  <rect x="1014.500" y="362.500" width="13" height="12" fill="#fff" stroke="#4a6a72"/>
  <path d="M1015 363.500 h12" stroke="#4a6ad0" stroke-width="1.500"/>
  <path d="M1015 367 h12 M1015 370.500 h12 M1018.700 364 v10 M1023 364 v10" stroke="#6a8088" stroke-width="1"/>
  <!-- hr -->
  <rect x="1040.500" y="361.500" width="13" height="13" fill="#fff" stroke="#a0a0a0"/>
  <path d="M1042 364.500 h10 M1042 371.500 h10" stroke="#c0c0c0"/><path d="M1042 368 h10" stroke="#3a5d63" stroke-width="2"/>
  <!-- toolbar end caps -->
  <path d="M1060.500 354.500 q2.500 .5 2.500 3 v21 q0 2.500 -2.500 3" fill="none" stroke="#7aa6f7" stroke-width="1"/>
  <path d="M1090.500 382.500 q2.500 .5 2.500 3 v21 q0 2.500 -2.500 3" fill="none" stroke="#7aa6f7" stroke-width="1"/>
  <!-- combo arrow -->
  <path d="M708.500 394 h6 l-3 3.500z" fill="#333"/>
  <!-- underline / strike -->
  <path d="M781 402.500 h10" stroke="#3a5d63" stroke-width="1.500"/>
  <path d="M804 396.500 h16" stroke="#3a5d63" stroke-width="1"/>
  <!-- text colour -->
  <rect x="900" y="396" width="3" height="3" fill="#3cb54a"/><rect x="904.500" y="396" width="3" height="3" fill="#ee3b3b"/><rect x="900" y="400.500" width="3" height="3" fill="#3b7bee"/><rect x="904.500" y="400.500" width="3" height="3" fill="#f2c230"/>
  <path d="M910.300 395 h5 l-2.500 3z M944 395 h5 l-2.500 3z" fill="#333"/>
  <rect x="926" y="388" width="15" height="15" fill="#ffff33"/>
  <!-- eraser -->
  <path d="M961 398 l5 -5.500 h8 l-5 5.500z" fill="#a9c8ff" stroke="#3a62d8" stroke-width="1"/>
  <path d="M961 398 h8 l5 -5.500 v2.500 l-5 5.500 h-8z" fill="#5a86f0" stroke="#3a62d8" stroke-width="1"/>
  <!-- link -->
  <circle cx="998.500" cy="395.500" r="6.200" fill="#5ad05a" stroke="#2a70d8" stroke-width="1"/>
  <path d="M998.500 389.500 q-4 6 -3 12 h6 q1 -6 -3 -12z" fill="#3a78e8"/>
  <rect x="991.500" y="398.500" width="14" height="5" rx="2.500" fill="#e8eef0" stroke="#2e5a60" stroke-width="1.300"/>
  <path d="M995 401 h7" stroke="#2e5a60" stroke-width="1.200"/>
  <!-- image -->
  <rect x="1018.500" y="390.500" width="13" height="12" fill="#bfe3f7" stroke="#4a6a60"/>
  <rect x="1019" y="398" width="12" height="4" fill="#7fc060"/>
  <circle cx="1022" cy="393.500" r="1.800" fill="#f7e070"/>
  <path d="M1024 396.500 l3 -3 l3 3z" fill="#f08030"/><rect x="1025" y="396.500" width="4" height="3" fill="#f7f0e0"/>
  <!-- flag -->
  <path d="M1046 390 v13" stroke="#3a55c8" stroke-width="1.800"/>
  <path d="M1047 390.500 q3 -1.500 5.500 0 q2.500 1.500 5.500 0 v7 q-3 1.500 -5.500 0 q-2.500 -1.500 -5.500 0z" fill="#d8d8d8" stroke="#4a6ad8" stroke-width="1"/>

</svg>
<div class="t" style="left:621px;top:361px;color:#808080;font-weight:300;-webkit-text-stroke-width:.22px">源码</div>
<div class="t" style="left:603px;top:389px;color:#808080;font-weight:300;-webkit-text-stroke-width:.22px">格式</div>
<div class="t" style="left:638px;top:391px;color:#808080;font-weight:300;-webkit-text-stroke-width:.22px">普通</div>
<div class="t" style="left:681px;top:357px;font-size:8.500px;font-weight:bold;letter-spacing:-1.200px;color:#3a5d63;-webkit-text-stroke:.5px #3a5d63">ABC</div>
<div class="t" style="left:730px;top:389px;font-weight:bold;color:#3a5d63;-webkit-text-stroke:.6px #3a5d63;font-size:13px">B</div>
<div class="t" style="left:757px;top:389px;font-weight:bold;color:#3a5d63;-webkit-text-stroke:.6px #3a5d63;font-size:13px;font-style:italic;font-family:'Liberation Serif',serif">I</div>
<div class="t" style="left:781px;top:388px;font-weight:bold;color:#3a5d63;-webkit-text-stroke:.6px #3a5d63;font-size:13px;-webkit-text-stroke:.5px #3a5d63">U</div>
<div class="t" style="left:804.5px;top:389px;font-size:9.500px;color:#3a5d63;letter-spacing:0">abc</div>
<div class="t" style="left:836px;top:388px;font-weight:bold;color:#3a5d63;-webkit-text-stroke:.6px #3a5d63;font-size:16px;-webkit-text-stroke:.3px #3a5d63">x<span style="font-size:9px;position:relative;top:3px;-webkit-text-stroke-width:.2px">2</span></div>
<div class="t" style="left:862px;top:388px;font-weight:bold;color:#3a5d63;-webkit-text-stroke:.6px #3a5d63;font-size:16px;-webkit-text-stroke:.3px #3a5d63">x<span style="font-size:9px;position:relative;top:-5px;-webkit-text-stroke-width:.2px">2</span></div>
<div class="t" style="left:892px;top:387px;font-weight:bold;font-size:14.500px;color:#f0a848;-webkit-text-stroke:.4px #f0a848">A</div>
<div class="t" style="left:928px;top:388px;font-weight:bold;font-size:15px;color:#4a6a72;-webkit-text-stroke:.5px #4a6a72">A</div>
<div class="t" style="left:1070px;top:388px;font-weight:bold;font-size:17px;color:#3050d0;line-height:18px;height:18px">Ω</div>
<div class="a" style="left:586px;top:410px;width:1311px;height:153px;background:#fff;border:1px solid #696969;border-top:2px solid #606060"></div>
<div class="t c" style="left:595px;top:428px;font-size:16px;line-height:22px;height:22px;color:#111;font-weight:300;-webkit-text-stroke-width:.22px">验证输入错误的账号和正确的密码是否能登录成功</div>
<div class="a" style="left:586px;top:563px;width:1311px;height:29px;background:#f7f8fd;border:1px solid #696969;border-top:0"></div>
<div class="t p" style="left:595px;top:567px;color:#111;letter-spacing:-.3px">body</div>
<div class="t p" style="left:632px;top:567px;color:#111">p</div>
<svg style="left:1883px;top:578px" width="13" height="13" viewBox="0 0 13 13"><path d="M0.500 13 L13 0.500 M4.500 13 L13 4.500 M8.500 13 L13 8.500" stroke="#707070" stroke-width="1" fill="none"/></svg>
<div class="a" style="left:1882px;top:394px;width:12px;height:12px;background:#f7f8fd;border:1px solid #b4b4b4;border-top-color:#fff;border-left-color:#fff"></div>
<svg style="left:1882px;top:394px" width="12" height="12" viewBox="0 0 12 12"><path d="M3 7.500 h6 l-3 -3.500z" fill="#000"/></svg>
<div class="t c b" style="left:586px;top:608px;font-size:13px">前提</div>
<div class="a" style="left:586px;top:624px;width:1311px;height:57px;background:#f7f8fd;border-right:1px solid #696969"></div>
<div class="a tbb" style="left:590px;top:625px;width:473px"></div>
<div class="a tbb" style="left:590px;top:653px;width:503px"></div>
<div class="a" style="left:842px;top:627px;width:26px;height:24px;border:1px solid #316ac5;border-radius:3px;background:#c1d2ee"></div>
<div class="a" style="left:632px;top:655px;width:87px;height:24px;border:1px solid #b0b29c;border-radius:3px;background:linear-gradient(90deg,#fdfdfe 0,#fdfdfe 70px,#b0b29c 70px,#b0b29c 71px,#eceef8 71px)"></div>
<svg style="left:586px;top:624px" width="520" height="57" viewBox="586 353 520 57">

  <g fill="#4a6fd8"><rect x="592" y="361" width="2" height="2"/><rect x="592" y="365" width="2" height="2"/><rect x="592" y="369" width="2" height="2"/><rect x="592" y="373" width="2" height="2"/><rect x="592" y="389" width="2" height="2"/><rect x="592" y="393" width="2" height="2"/><rect x="592" y="397" width="2" height="2"/><rect x="592" y="401" width="2" height="2"/></g>
  <g stroke="#a9c1f5" stroke-width="1"><path d="M782.500 360 v16 M839.500 360 v16 M948.500 360 v16 M1005.500 360 v16 M827.500 388 v16 M884.500 388 v16 M983.500 388 v16"/></g>
  <!-- source -->
  <rect x="604.500" y="361.500" width="10" height="13" fill="#fff" stroke="#8a8a8a"/>
  <path d="M606 364.500 h3" stroke="#f0a030"/><path d="M606 366.500 h7 M606 368.500 h7 M606 370.500 h7 M609 372.500 h4" stroke="#3a5d63"/>
  <!-- templates -->
  <rect x="657.500" y="361.500" width="10" height="13" fill="#fff" stroke="#8a8a8a"/>
  <path d="M659.500 364 v9" stroke="#f0a030" stroke-width="1.500"/><path d="M661.500 364.500 h4 M661.500 366.500 h4 M661.500 368.500 h4 M661.500 370.500 h4 M661.500 372.500 h4" stroke="#3a5d63"/>
  <!-- spellcheck tick -->
  <path d="M684.500 371.500 l3 3 l5 -5" fill="none" stroke="#3a5d63" stroke-width="1.500"/>
  <!-- binoculars -->
  <path d="M710.500 361.500 h2.500 v3 l1.500 1.500 v7.500 h-5 v-7.500 l1 -1.500z M718.500 361.500 h2.500 v3 l1 1.500 v7.500 h-5 v-7.500 l1.500 -1.500z" fill="#e4e9ff" stroke="#3a55d0" stroke-width="1"/>
  <path d="M714.500 366.500 h2.500 v3.500 h-2.500z" fill="#3a55d0"/><path d="M710.500 370 h3 v3 h-3z M718 370 h3 v3 h-3z" fill="#909090"/>
  <!-- undo / redo -->
  <path d="M734 368 l5.500 -4.500 v3 q6.500 0 7 7 q-2 -3.500 -7 -3.500 v2.500z" fill="#3a5d63"/>
  <path d="M773.500 368 l-5.500 -4.500 v3 q-6.500 0 -7 7 q2 -3.500 7 -3.500 v2.500z" fill="#b3c0cc"/>
  <!-- OL -->
  <path d="M797 362.500 h8 M797 367.500 h8 M797 372.500 h8" stroke="#3a5d63" stroke-width="1"/>
  <g font-family="Liberation Sans,sans-serif" font-size="5.500" font-weight="bold" fill="#3a5d63"><text x="791.500" y="364.500">1</text><text x="791.500" y="369.500">2</text><text x="791.500" y="374.500">3</text></g>
  <!-- UL -->
  <path d="M823 362.500 h7 M823 367.500 h7 M823 372.500 h7" stroke="#3a5d63" stroke-width="1"/>
  <path d="M818 361 h3 v3 h-3z M818 366 h3 v3 h-3z M818 371 h3 v3 h-3z" fill="#3a5d63"/>
  <!-- align left (active) -->
  <path d="M849 362.500 h8 M849 364.500 h12 M849 366.500 h8 M849 368.500 h12 M849 370.500 h8 M849 372.500 h12" stroke="#1e4a4e" stroke-width="1"/>
  <path d="M877 362.500 h8 M875 364.500 h12 M877 366.500 h8 M875 368.500 h12 M877 370.500 h8 M875 372.500 h12" stroke="#3a5d63" stroke-width="1"/>
  <path d="M905 362.500 h8 M901 364.500 h12 M905 366.500 h8 M901 368.500 h12 M905 370.500 h8 M901 372.500 h12" stroke="#3a5d63" stroke-width="1"/>
  <path d="M926 362.500 h13 M926 364.500 h13 M926 366.500 h13 M926 368.500 h13 M926 370.500 h13 M926 372.500 h13" stroke="#3a5d63" stroke-width="1"/>
  <!-- outdent (disabled) / indent -->
  <g opacity=".4"><path d="M961 363.500 h10 M964 366 h5 M964 368.500 h7 M961 371.500 h10" stroke="#6a7a80" stroke-width="1.200"/><path d="M962 367.500 h-5 M959.500 365 l-2.500 2.500 l2.500 2.500" fill="none" stroke="#f0a030" stroke-width="1.200"/></g>
  <path d="M987 363.500 h10 M991 366 h5 M991 368.500 h6 M987 371.500 h10" stroke="#3a5d63" stroke-width="1.200"/><path d="M982 367.500 h5.500 M985 365 l2.500 2.500 l-2.500 2.500" fill="none" stroke="#f59a23" stroke-width="1.200"/>
  <path d="M987 361.500 h1 M987 373.500 h1" stroke="#3a5d63"/>
  <!-- table -->
  <rect x="1014.500" y="362.500" width="13" height="12" fill="#fff" stroke="#4a6a72"/>
  <path d="M1015 363.500 h12" stroke="#4a6ad0" stroke-width="1.500"/>
  <path d="M1015 367 h12 M1015 370.500 h12 M1018.700 364 v10 M1023 364 v10" stroke="#6a8088" stroke-width="1"/>
  <!-- hr -->
  <rect x="1040.500" y="361.500" width="13" height="13" fill="#fff" stroke="#a0a0a0"/>
  <path d="M1042 364.500 h10 M1042 371.500 h10" stroke="#c0c0c0"/><path d="M1042 368 h10" stroke="#3a5d63" stroke-width="2"/>
  <!-- toolbar end caps -->
  <path d="M1060.500 354.500 q2.500 .5 2.500 3 v21 q0 2.500 -2.500 3" fill="none" stroke="#7aa6f7" stroke-width="1"/>
  <path d="M1090.500 382.500 q2.500 .5 2.500 3 v21 q0 2.500 -2.500 3" fill="none" stroke="#7aa6f7" stroke-width="1"/>
  <!-- combo arrow -->
  <path d="M708.500 394 h6 l-3 3.500z" fill="#333"/>
  <!-- underline / strike -->
  <path d="M781 402.500 h10" stroke="#3a5d63" stroke-width="1.500"/>
  <path d="M804 396.500 h16" stroke="#3a5d63" stroke-width="1"/>
  <!-- text colour -->
  <rect x="900" y="396" width="3" height="3" fill="#3cb54a"/><rect x="904.500" y="396" width="3" height="3" fill="#ee3b3b"/><rect x="900" y="400.500" width="3" height="3" fill="#3b7bee"/><rect x="904.500" y="400.500" width="3" height="3" fill="#f2c230"/>
  <path d="M910.300 395 h5 l-2.500 3z M944 395 h5 l-2.500 3z" fill="#333"/>
  <rect x="926" y="388" width="15" height="15" fill="#ffff33"/>
  <!-- eraser -->
  <path d="M961 398 l5 -5.500 h8 l-5 5.500z" fill="#a9c8ff" stroke="#3a62d8" stroke-width="1"/>
  <path d="M961 398 h8 l5 -5.500 v2.500 l-5 5.500 h-8z" fill="#5a86f0" stroke="#3a62d8" stroke-width="1"/>
  <!-- link -->
  <circle cx="998.500" cy="395.500" r="6.200" fill="#5ad05a" stroke="#2a70d8" stroke-width="1"/>
  <path d="M998.500 389.500 q-4 6 -3 12 h6 q1 -6 -3 -12z" fill="#3a78e8"/>
  <rect x="991.500" y="398.500" width="14" height="5" rx="2.500" fill="#e8eef0" stroke="#2e5a60" stroke-width="1.300"/>
  <path d="M995 401 h7" stroke="#2e5a60" stroke-width="1.200"/>
  <!-- image -->
  <rect x="1018.500" y="390.500" width="13" height="12" fill="#bfe3f7" stroke="#4a6a60"/>
  <rect x="1019" y="398" width="12" height="4" fill="#7fc060"/>
  <circle cx="1022" cy="393.500" r="1.800" fill="#f7e070"/>
  <path d="M1024 396.500 l3 -3 l3 3z" fill="#f08030"/><rect x="1025" y="396.500" width="4" height="3" fill="#f7f0e0"/>
  <!-- flag -->
  <path d="M1046 390 v13" stroke="#3a55c8" stroke-width="1.800"/>
  <path d="M1047 390.500 q3 -1.500 5.500 0 q2.500 1.500 5.500 0 v7 q-3 1.500 -5.500 0 q-2.500 -1.500 -5.500 0z" fill="#d8d8d8" stroke="#4a6ad8" stroke-width="1"/>

</svg>
<div class="t" style="left:621px;top:632px;color:#808080;font-weight:300;-webkit-text-stroke-width:.22px">源码</div>
<div class="t" style="left:603px;top:660px;color:#808080;font-weight:300;-webkit-text-stroke-width:.22px">格式</div>
<div class="t" style="left:638px;top:662px;color:#808080;font-weight:300;-webkit-text-stroke-width:.22px">普通</div>
<div class="t" style="left:681px;top:628px;font-size:8.500px;font-weight:bold;letter-spacing:-1.200px;color:#3a5d63;-webkit-text-stroke:.5px #3a5d63">ABC</div>
<div class="t" style="left:730px;top:660px;font-weight:bold;color:#3a5d63;-webkit-text-stroke:.6px #3a5d63;font-size:13px">B</div>
<div class="t" style="left:757px;top:660px;font-weight:bold;color:#3a5d63;-webkit-text-stroke:.6px #3a5d63;font-size:13px;font-style:italic;font-family:'Liberation Serif',serif">I</div>
<div class="t" style="left:781px;top:659px;font-weight:bold;color:#3a5d63;-webkit-text-stroke:.6px #3a5d63;font-size:13px;-webkit-text-stroke:.5px #3a5d63">U</div>
<div class="t" style="left:804.5px;top:660px;font-size:9.500px;color:#3a5d63;letter-spacing:0">abc</div>
<div class="t" style="left:836px;top:659px;font-weight:bold;color:#3a5d63;-webkit-text-stroke:.6px #3a5d63;font-size:16px;-webkit-text-stroke:.3px #3a5d63">x<span style="font-size:9px;position:relative;top:3px;-webkit-text-stroke-width:.2px">2</span></div>
<div class="t" style="left:862px;top:659px;font-weight:bold;color:#3a5d63;-webkit-text-stroke:.6px #3a5d63;font-size:16px;-webkit-text-stroke:.3px #3a5d63">x<span style="font-size:9px;position:relative;top:-5px;-webkit-text-stroke-width:.2px">2</span></div>
<div class="t" style="left:892px;top:658px;font-weight:bold;font-size:14.500px;color:#f0a848;-webkit-text-stroke:.4px #f0a848">A</div>
<div class="t" style="left:928px;top:659px;font-weight:bold;font-size:15px;color:#4a6a72;-webkit-text-stroke:.5px #4a6a72">A</div>
<div class="t" style="left:1070px;top:659px;font-weight:bold;font-size:17px;color:#3050d0;line-height:18px;height:18px">Ω</div>
<div class="a" style="left:586px;top:681px;width:1311px;height:153px;background:#fff;border:1px solid #696969;border-top:2px solid #606060"></div>
<div class="t c" style="left:595px;top:699px;font-size:16px;line-height:22px;height:22px;color:#111;font-weight:300;-webkit-text-stroke-width:.22px">进入园林网站</div>
<div class="a" style="left:586px;top:834px;width:1311px;height:29px;background:#f7f8fd;border:1px solid #696969;border-top:0"></div>
<div class="t p" style="left:595px;top:838px;color:#111;letter-spacing:-.3px">body</div>
<div class="t p" style="left:632px;top:838px;color:#111">p</div>
<svg style="left:1883px;top:849px" width="13" height="13" viewBox="0 0 13 13"><path d="M0.500 13 L13 0.500 M4.500 13 L13 4.500 M8.500 13 L13 8.500" stroke="#707070" stroke-width="1" fill="none"/></svg>
<div class="a" style="left:1882px;top:665px;width:12px;height:12px;background:#f7f8fd;border:1px solid #b4b4b4;border-top-color:#fff;border-left-color:#fff"></div>
<svg style="left:1882px;top:665px" width="12" height="12" viewBox="0 0 12 12"><path d="M3 7.500 h6 l-3 -3.500z" fill="#000"/></svg>
<div class="t c b" style="left:589px;top:902px;font-size:13px">状态</div>
<div class="sel" style="left:619px;top:902px;width:129px;height:18px"></div>
<div class="t p" style="left:624px;top:904px;color:#222">Draft</div>
<div class="t c b" style="left:772px;top:902px;font-size:13px">重要性</div>
<div class="sel" style="left:815px;top:900px;width:36px;height:18px"></div>
<div class="t c" style="left:820px;top:903px;font-size:12px;color:#111;font-weight:300;-webkit-text-stroke-width:.22px">中</div>
<div class="t c b" style="left:875px;top:902px;font-size:13px">测试方式</div>
<div class="sel" style="left:931px;top:900px;width:60px;height:18px"></div>
<div class="t c" style="left:936px;top:903px;font-size:12px;color:#111;font-weight:300;-webkit-text-stroke-width:.22px">手工</div>
<div class="t p" style="left:1015px;top:902px;letter-spacing:.54px;color:#111">Estimated exec. duration (min)</div>
<div class="inp" style="left:1210px;top:902px;width:70px;height:18px"></div>
<div class="t c b" style="left:589px;top:936px;font-size:13px;color:#005498">关键字</div>
<div class="a" style="left:589px;top:952px;width:1304px;height:80px;border:1px solid #f4f8fc"></div>
<div class="t c b" style="left:882px;top:959px;font-size:13px">有效关键字</div>
<div class="inp" style="left:601px;top:979px;width:626px;height:60px;background:#f8f8f8;border-color:#8e8e8e"><div class="a" style="right:0;top:0;width:17px;height:58px;background:#f1f1f1"></div></div>
<div class="t c" style="left:604px;top:981px;font-size:12px;color:#111;font-weight:300;-webkit-text-stroke-width:.22px">园林</div>
<div class="t c b" style="left:1536px;top:967px;font-size:13px">指派关键字</div>
<div class="inp" style="left:1255px;top:987px;width:626px;height:60px;background:#fff;border-color:#1c2a3c"><div class="a" style="right:0;top:0;width:17px;height:58px;background:#f1f1f1"></div></div>
<svg style="left:1200px;top:980px" width="700" height="40" viewBox="1200 980 700 40"><path d="M1214 991 h7 l-3.500 -3.500z M1868 999 h7 l-3.500 -3.500z" fill="#a8a8a8"/><defs><linearGradient id="chv" x1="0" y1="0" x2="1" y2="1"><stop offset="0" stop-color="#0b3fd0"/><stop offset=".5" stop-color="#2f8cff"/><stop offset="1" stop-color="#0b4fd8"/></linearGradient></defs><path d="M1234 1006.500 h3.200 l4.300 5.700 l-4.300 5.800 h-3.200 l3.600 -5.800z M1240 1006.500 h3.200 l4.800 5.700 l-4.800 5.800 h-3.200 l3.600 -5.800z" fill="url(#chv)" stroke="#0a3ab8" stroke-width=".5"/></svg>
<div class="a" style="left:1903px;top:205px;width:17px;height:814px;background:#f1f1f1"></div>
<div class="a" style="left:1905px;top:222px;width:13px;height:628px;background:#c1c1c1"></div>
<svg style="left:1903px;top:205px" width="17" height="814" viewBox="1903 205 17 814"><path d="M1908 216 h7 l-3.500 -4z" fill="#a3a3a3"/><path d="M1908 1006 h7 l-3.500 4z" fill="#505050"/></svg>
<svg style="left:470px;top:255px" width="140" height="130" viewBox="470 255 140 130"><path d="M483.500 375.300 L578.500 277.500 L575.500 273 L593 267 L585.800 284.500 L582.700 281.300 L484.500 376.200Z" fill="#ff3b3b"/></svg>
<!-- ======= STATUS BAR ======= -->
<div class="a" id="statusbar"></div>
<svg style="left:0;top:1019px" width="1920" height="21" viewBox="0 1019 1920 21">
  <path d="M9.500 1023.500 v12 M14.500 1024 l8 5.500 l-8 5.500z" fill="none" stroke="#666" stroke-width="1"/>
  <path d="M30.500 1019 v21" stroke="#e4e4e4"/>
  <path d="M1750 1026.500 h3 l4.500 -3.500 v12 l-4.500 -3.500 h-3z" fill="none" stroke="#777" stroke-width="1"/><path d="M1760 1025.500 q3 3.500 0 7 M1763 1024 q4.500 5 0 10" fill="none" stroke="#777" stroke-width="1"/>
  <rect x="1786.500" y="1026.500" width="12" height="9" rx="1" fill="none" stroke="#777"/><path d="M1789.500 1026.500 v-2.500 h6 v2.500 M1792.500 1028.500 v5 M1790 1031 h5" fill="none" stroke="#777"/>
  <path d="M1820.500 1024 l5.800 -1.700 l5.800 1.700 v5.500 q0 4 -5.800 6.700 q-5.800 -2.700 -5.800 -6.700z" fill="none" stroke="#777"/>
  <circle cx="1868.300" cy="1028.500" r="6.200" fill="none" stroke="#777" stroke-width="1"/><path d="M1865 1028.500 h6.600 M1868.300 1025.200 v6.600 M1873 1033 l3.500 3.500" stroke="#777" stroke-width="1"/>
  <rect x="1910" y="975.500" width="14" height="58" rx="3" fill="#4a5160"/>
  <g stroke-width="1"><path d="M1914 981.500 h5 M1914 983.500 h5 M1914 985.500 h5 M1914 987.500 h5 M1914 989.500 h5 M1914 991.500 h5" stroke="#7a8090"/><path d="M1914 993.500 h5 M1914 995.500 h5 M1914 997.500 h5 M1914 999.500 h5 M1914 1001.500 h5" stroke="#e8c050"/><path d="M1914 1003.500 h5 M1914 1005.500 h5 M1914 1007.500 h5 M1914 1009.500 h5 M1914 1011.500 h5 M1914 1013.500 h5" stroke="#a8d060"/><path d="M1914 1015.500 h5 M1914 1017.500 h5 M1914 1019.500 h5 M1914 1021.500 h5 M1914 1023.500 h5 M1914 1025.500 h5 M1914 1027.500 h5" stroke="#50d8c0"/></g>
</svg>
<div class="t" style="left:36px;top:1022px;font-size:12px;color:#6a6a6a;font-weight:300;-webkit-text-stroke-width:.2px">完成</div>
<div class="t" style="left:1823px;top:1021px;font-size:7px;font-weight:bold;color:#777;letter-spacing:-.3px">AD</div>
<div class="t" style="left:1837px;top:1021px;font-size:12px;color:#8a8a8a">0</div>
<div class="t" style="left:1881px;top:1021px;font-size:12px;color:#8a8a8a">100%</div>
</body>
</html>
